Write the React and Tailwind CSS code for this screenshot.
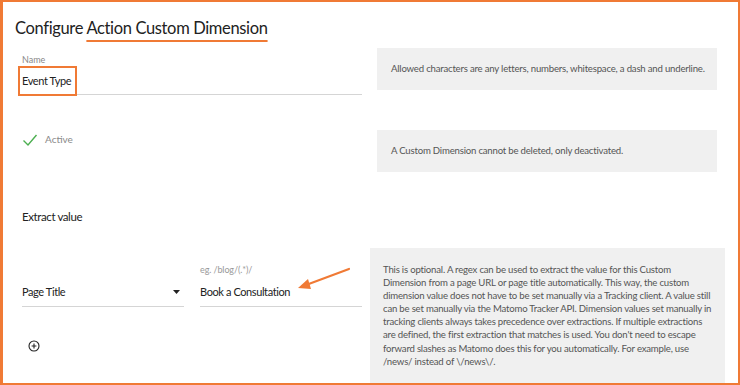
import React from 'react';

const Arrow = () => (
  <svg className="absolute left-[291px] top-[262px]" width="62" height="30" viewBox="0 0 62 30">
    <line x1="55" y1="5" x2="12" y2="21" stroke="#f07a35" strokeWidth="2.2" strokeLinecap="round" />
    <path d="M4 24 L14 15 L17 25 Z" fill="#f07a35" />
  </svg>
);

const InfoBox = ({ children, className = '' }) => (
  <div className={`bg-[#f0f0f0] text-[#555] text-[9.6px] tracking-[-0.2px] ${className}`}>{children}</div>
);

export default function App() {
  return (
    <div
      className="relative w-[740px] h-[385px] overflow-hidden bg-white border-t-2 border-l-[3px] border-r-2 border-b-2 border-[#f07a35] text-[#333]"
      style={{ fontFamily: 'Lato, "Open Sans", sans-serif' }}
    >
      <h1 className="pl-[12px] pt-[14px] text-[16.5px] tracking-[-0.35px] leading-[24px] text-[#222]">
        Configure{' '}
        <span className="underline decoration-2 underline-offset-[6px] decoration-[#f07a35]">Action Custom Dimension</span>
      </h1>

      {/* Name */}
      <div className="flex mt-[14px]">
        <div className="ml-[15px] w-[344px]">
          <div className="pl-[4px] text-[9px] text-[#888] leading-[12px]">Name</div>
          <div className="border-b border-[#d5d5d5] h-[29px]">
            <span className="inline-block w-[59px] border-2 border-[#f07a35] pl-[2px] h-[30px] leading-[25px] text-[11px] tracking-[-0.4px] text-[#222] whitespace-nowrap">
              Event Type
            </span>
          </div>
        </div>
        <InfoBox className="ml-[15px] w-[340px] h-[42px] mt-[-6px] pl-[14px] flex items-center">
          Allowed characters are any letters, numbers, whitespace, a dash and underline.
        </InfoBox>
      </div>

      {/* Active */}
      <div className="flex mt-[35px]">
        <div className="ml-[15px] w-[344px] pt-[2px] flex items-start">
          <svg className="ml-[4px] mt-[1px]" width="16" height="14" viewBox="0 0 16 14">
            <path d="M1.5 7.5 L6 12 L14.5 2" fill="none" stroke="#4caf50" strokeWidth="1.4" />
          </svg>
          <span className="ml-[7px] text-[10px] leading-[14px] text-[#8a8a8a]">Active</span>
        </div>
        <InfoBox className="ml-[15px] w-[340px] h-[42px] pl-[14px] flex items-center">
          A Custom Dimension cannot be deleted, only deactivated.
        </InfoBox>
      </div>

      {/* Extract value */}
      <div className="ml-[19px] mt-[37px] text-[11.5px] tracking-[-0.4px] leading-[16px] text-[#222]">Extract value</div>

      <div className="flex mt-[23px]">
        <div className="ml-[19px] w-[340px] flex items-start text-[11px] tracking-[-0.4px]">
          <div className="w-[162px] mt-[36px] border-b border-[#d5d5d5] h-[23px] flex items-start justify-between">
            <span className="leading-[16px] text-[#222]">Page Title</span>
            <svg className="mr-[4px] mt-[6px]" width="7" height="4" viewBox="0 0 7 4">
              <path d="M0 0 L7 0 L3.5 4 Z" fill="#222" />
            </svg>
          </div>
          <div className="ml-[16px] w-[162px] mt-[15px]">
            <div className="text-[9px] tracking-[-0.1px] text-[#999] leading-[12px] h-[21px] pt-[1px]">eg. /blog/(.*)/</div>
            <div className="border-b border-[#d5d5d5] h-[23px] leading-[16px] text-[#222]">Book a Consultation</div>
          </div>
        </div>
        <InfoBox className="ml-[8px] w-[355px] h-[140px] pl-[13px] pt-[15px] leading-[13.1px] whitespace-nowrap">
          This is optional. A regex can be used to extract the value for this Custom
          <br />
          Dimension from a page URL or page title automatically. This way, the custom
          <br />
          dimension value does not have to be set manually via a Tracking client. A value still
          <br />
          can be set manually via the Matomo Tracker API. Dimension values set manually in
          <br />
          tracking clients always takes precedence over extractions. If multiple extractions
          <br />
          are defined, the first extraction that matches is used. You don't need to escape
          <br />
          forward slashes as Matomo does this for you automatically. For example, use
          <br />
          /news/ instead of \/news\/.
        </InfoBox>
      </div>

      <div className="absolute left-[25px] top-[338px]">
        <svg width="12" height="12" viewBox="0 0 12 12">
          <circle cx="6" cy="6" r="5" fill="none" stroke="#222" strokeWidth="1.1" />
          <path d="M6 3.6 V8.4 M3.6 6 H8.4" stroke="#222" strokeWidth="1.1" />
        </svg>
      </div>

      <Arrow />
    </div>
  );
}
